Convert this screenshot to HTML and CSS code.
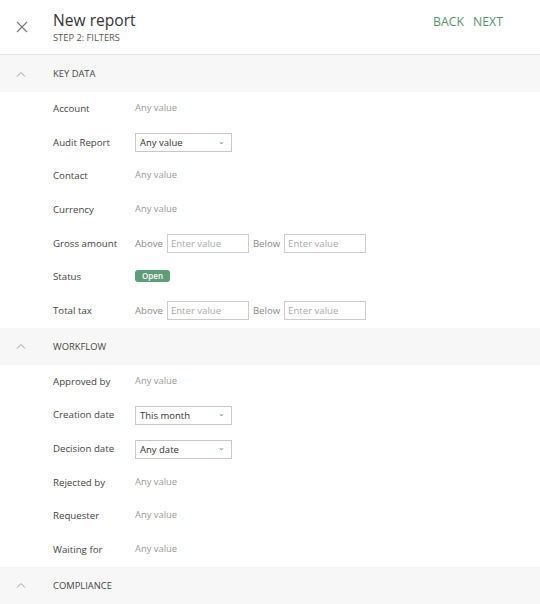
FILE: index.html
```html
<!DOCTYPE html>
<html lang="en">
<head>
  <meta charset="UTF-8">
  <title>New report</title>
  <link rel="stylesheet" href="styles.css">
</head>
<body>

  <div class="header">
    <div class="close">
      <svg width="12" height="12" viewBox="0 0 12 12"><path d="M1 1L11 11M11 1L1 11" stroke="#777" stroke-width="1.1" fill="none"/></svg>
    </div>
    <div class="titles">
      <div class="title">New report</div>
      <div class="step">STEP 2: FILTERS</div>
    </div>
    <div class="nav">
      <span>BACK</span>
      <span>NEXT</span>
    </div>
  </div>

  <div class="section">
    <span class="chev"><svg width="10" height="6" viewBox="0 0 10 6"><path d="M1 5.5L5 1.5L9 5.5" stroke="#999" stroke-width="1" fill="none"/></svg></span>
    KEY DATA
  </div>
  <div class="row"><div class="label">Account</div><div class="any">Any value</div></div>
  <div class="row"><div class="label">Audit Report</div><div class="select">Any value<span class="arrow">&#8964;</span></div></div>
  <div class="row"><div class="label">Contact</div><div class="any">Any value</div></div>
  <div class="row"><div class="label">Currency</div><div class="any">Any value</div></div>
  <div class="row">
    <div class="label">Gross amount</div>
    <div class="range">
      <span>Above</span><div class="input">Enter value</div>
      <span>Below</span><div class="input">Enter value</div>
    </div>
  </div>
  <div class="row"><div class="label">Status</div><div class="badge">Open</div></div>
  <div class="row">
    <div class="label">Total tax</div>
    <div class="range">
      <span>Above</span><div class="input">Enter value</div>
      <span>Below</span><div class="input">Enter value</div>
    </div>
  </div>

  <div class="section">
    <span class="chev"><svg width="10" height="6" viewBox="0 0 10 6"><path d="M1 5.5L5 1.5L9 5.5" stroke="#999" stroke-width="1" fill="none"/></svg></span>
    WORKFLOW
  </div>
  <div class="row"><div class="label">Approved by</div><div class="any">Any value</div></div>
  <div class="row"><div class="label">Creation date</div><div class="select">This month<span class="arrow">&#8964;</span></div></div>
  <div class="row"><div class="label">Decision date</div><div class="select">Any date<span class="arrow">&#8964;</span></div></div>
  <div class="row"><div class="label">Rejected by</div><div class="any">Any value</div></div>
  <div class="row"><div class="label">Requester</div><div class="any">Any value</div></div>
  <div class="row"><div class="label">Waiting for</div><div class="any">Any value</div></div>

  <div class="section">
    <span class="chev"><svg width="10" height="6" viewBox="0 0 10 6"><path d="M1 5.5L5 1.5L9 5.5" stroke="#999" stroke-width="1" fill="none"/></svg></span>
    COMPLIANCE
  </div>

</body>
</html>
```

FILE: styles.css
```css
body {
  margin: 0;
  font-family: "Open Sans", Arial, sans-serif;
  color: #444;
  background-color: #fff;
}

.header {
  height: 54px;
  display: flex;
  align-items: flex-start;
  border-bottom: 1px solid #e6e6e6;
}

.close {
  width: 53px;
  padding: 16px 0 0 16px;
  box-sizing: border-box;
}

.titles {
  flex: 1;
  padding-top: 9px;
}

.title {
  font-size: 15.6px;
  line-height: 22px;
  color: #333;
}

.step {
  font-size: 9.3px;
  color: #555;
  line-height: 14px;
}

.nav {
  display: flex;
  gap: 9px;
  padding: 13px 37px 0 0;
  font-size: 12.3px;
  color: #5a9470;
}

.section {
  height: 37px;
  display: flex;
  align-items: center;
  background-color: #f7f7f7;
  font-size: 9.4px;
  color: #444;
}

.chev {
  width: 53px;
  padding-left: 16px;
  box-sizing: border-box;
  display: flex;
}

.row {
  height: 33.7px;
  display: flex;
  align-items: center;
  font-size: 9.7px;
}

.label {
  width: 82px;
  padding-left: 53px;
  color: #444;
  margin-top: -1px;
}

.any {
  color: #999;
  font-size: 9.4px;
  margin-top: -3px;
}

.select {
  width: 97px;
  height: 19px;
  box-sizing: border-box;
  border: 1px solid #c8c8c8;
  padding: 0 6px 0 4px;
  display: flex;
  align-items: center;
  justify-content: space-between;
  color: #333;
  font-size: 9.5px;
}

.arrow {
  color: #5a9470;
  font-size: 8px;
  margin-top: -5px;
}

.range {
  display: flex;
  align-items: center;
  gap: 4px;
  color: #888;
  font-size: 9.6px;
}

.input {
  width: 82px;
  height: 19px;
  box-sizing: border-box;
  border: 1px solid #ccc;
  padding-left: 3px;
  line-height: 17px;
  color: #aaa;
}

.badge {
  background-color: #5e9c7a;
  color: #fff;
  font-size: 8px;
  font-weight: 600;
  padding: 0 7px;
  width: 21px;
  line-height: 12px;
  border-radius: 3px;
  margin-top: -2px;
}
```
